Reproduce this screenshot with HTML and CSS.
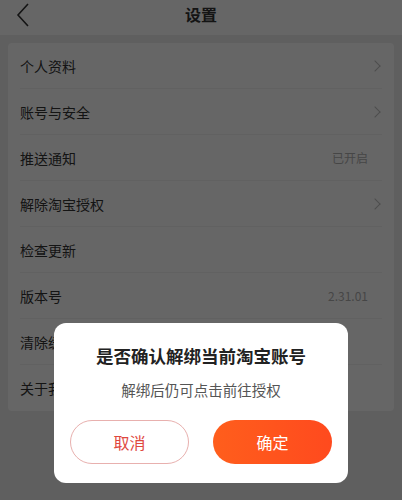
FILE: index.html
```html
<!DOCTYPE html>
<html lang="zh-CN">
<head>
    <meta charset="UTF-8">
    <meta name="viewport" content="width=device-width, initial-scale=1.0">
    <title>设置</title>
    <link rel="stylesheet" href="styles.css">
</head>
<body>

<div class="header">
    <svg class="back" width="14" height="24" viewBox="0 0 14 24"><path d="M12 1 L2 12 L12 23" fill="none" stroke="#333" stroke-width="1.6"/></svg>
    <div class="title">设置</div>
</div>

<div class="card">
    <div class="row"><span>个人资料</span><span class="arrow"></span></div>
    <div class="row"><span>账号与安全</span><span class="arrow"></span></div>
    <div class="row"><span>推送通知</span><span class="value">已开启</span></div>
    <div class="row"><span>解除淘宝授权</span><span class="arrow"></span></div>
    <div class="row"><span>检查更新</span></div>
    <div class="row"><span>版本号</span><span class="value">2.31.01</span></div>
    <div class="row"><span>清除缓存</span></div>
    <div class="row last"><span>关于我们</span></div>
</div>

<div class="mask">
    <div class="dialog">
        <div class="dialog-title">是否确认解绑当前淘宝账号</div>
        <div class="dialog-desc">解绑后仍可点击前往授权</div>
        <div class="dialog-buttons">
            <button class="cancel-btn">取消</button>
            <button class="ok-btn">确定</button>
        </div>
    </div>
</div>

</body>
</html>
```

FILE: styles.css
```css
body {
    margin: 0;
    font-family: "Noto Sans CJK SC", "Noto Sans", sans-serif;
    background-color: #eeeeee;
    color: #333;
    height: 500px;
    overflow: hidden;
}
.header {
    height: 35px;
    background-color: #fff;
    display: flex;
    align-items: center;
    justify-content: center;
    position: relative;
}
.header .back {
    position: absolute;
    left: 16px;
    top: 3px;
}
.header .title {
    font-size: 16px;
    font-weight: bold;
    margin-top: -7px;
}
.card {
    margin: 8px 8px 0;
    background-color: #fff;
    border-radius: 4px;
}
.row {
    height: 46px;
    margin: 0 12px;
    display: flex;
    align-items: center;
    justify-content: space-between;
    font-size: 14px;
    border-bottom: 1px solid #f2f2f2;
    box-sizing: border-box;
}
.row.last {
    border-bottom: none;
}
.value {
    font-size: 12px;
    color: #b0b0b0;
    margin-right: 14px;
}
.arrow {
    width: 7px;
    height: 7px;
    border-top: 1px solid #c0c0c0;
    border-right: 1px solid #c0c0c0;
    transform: rotate(45deg);
    margin-right: 3px;
}
.mask {
    position: fixed;
    top: 0;
    left: 0;
    right: 0;
    bottom: 0;
    background-color: rgba(0, 0, 0, 0.6);
    display: flex;
    justify-content: center;
    align-items: flex-end;
    padding-bottom: 17px;
    box-sizing: border-box;
}
.dialog {
    width: 294px;
    background-color: #fff;
    border-radius: 12px;
    padding: 20px 16px 19px;
    box-sizing: border-box;
    text-align: center;
}
.dialog-title {
    font-size: 17.5px;
    font-weight: bold;
    line-height: 26px;
    color: #222;
}
.dialog-desc {
    font-size: 14.5px;
    color: #555;
    line-height: 22px;
    margin-top: 10px;
}
.dialog-buttons {
    display: flex;
    justify-content: space-between;
    margin-top: 19px;
}
.dialog-buttons button {
    width: 119px;
    height: 44px;
    border-radius: 22px;
    font-family: inherit;
    font-size: 16px;
    cursor: pointer;
}
.cancel-btn {
    background-color: #fff;
    border: 1px solid #e8b0ae;
    color: #e0483e;
}
.ok-btn {
    border: none;
    color: #fff;
    background: linear-gradient(90deg, #ff5e1c, #ff4a1e);
}
```
